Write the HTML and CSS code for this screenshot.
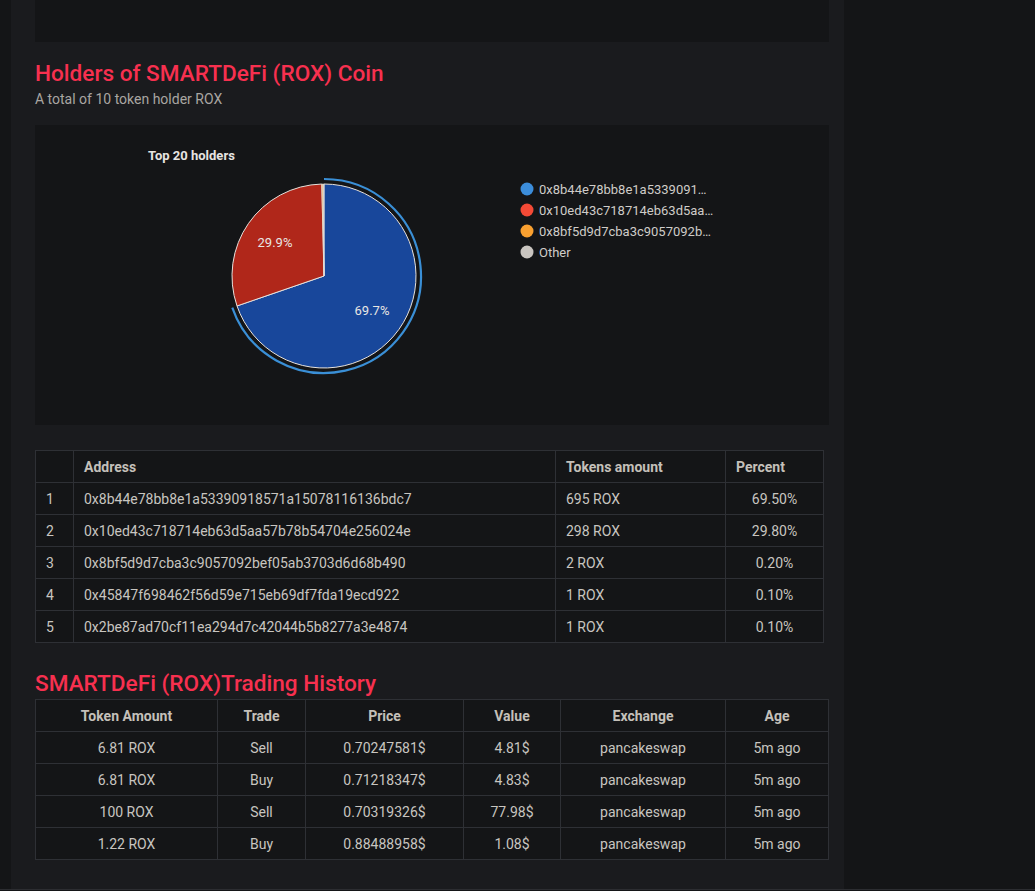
FILE: index.html
```html
<!DOCTYPE html>
<html lang="en">
<head>
<meta charset="utf-8">
<title>SMARTDeFi (ROX) Holders</title>
<link rel="stylesheet" href="styles.css">
</head>
<body>
<div class="layout">
  <main class="panel">
    <div class="top-card"></div>

    <section class="holders">
      <h2 class="section-title">Holders of SMARTDeFi (ROX) Coin</h2>
      <p class="section-sub">A total of 10 token holder ROX</p>

      <div class="chart-card">
        <svg class="chart" width="794" height="300" viewBox="0 0 794 300">
          <text class="chart-title" x="113" y="35">Top 20 holders</text>
          <g class="pie">
            <path d="M289 59 A92 92 0 1 1 202.01 180.95 L289 151 Z" fill="#18479b" stroke="#e6e2dd" stroke-width="1"/>
            <path d="M202.01 180.95 A92 92 0 0 1 286.75 59.03 L289 151 Z" fill="#b0271a" stroke="#e6e2dd" stroke-width="1"/>
            <path d="M286.75 59.03 A92 92 0 0 1 287.9 59.01 L289 151 Z" fill="#f9a030" stroke="#e6e2dd" stroke-width="0.6"/>
            <path d="M287.9 59.01 A92 92 0 0 1 289 59 L289 151 Z" fill="#c9c5c0" stroke="#e6e2dd" stroke-width="0.6"/>
            <path d="M289 54 A97 97 0 1 1 197.28 182.58" fill="none" stroke="#3a8fd6" stroke-width="2.2"/>
            <text class="pie-label" x="337" y="190" text-anchor="middle">69.7%</text>
            <text class="pie-label" x="240" y="122" text-anchor="middle">29.9%</text>
          </g>
          <g class="legend">
            <circle cx="492" cy="64" r="6.5" fill="#3c8ddb"/>
            <text x="504" y="68.5">0x8b44e78bb8e1a5339091…</text>
            <circle cx="492" cy="85" r="6.5" fill="#f44a36"/>
            <text x="504" y="89.5">0x10ed43c718714eb63d5aa…</text>
            <circle cx="492" cy="106" r="6.5" fill="#f9a030"/>
            <text x="504" y="110.5">0x8bf5d9d7cba3c9057092b…</text>
            <circle cx="492" cy="127" r="6.5" fill="#c9c5c0"/>
            <text x="504" y="131.5">Other</text>
          </g>
        </svg>
      </div>

      <table class="grid holders-table">
        <colgroup>
          <col class="c-idx"><col class="c-addr"><col class="c-tok"><col class="c-pct">
        </colgroup>
        <thead>
          <tr><th></th><th>Address</th><th>Tokens amount</th><th>Percent</th></tr>
        </thead>
        <tbody>
          <tr><td>1</td><td>0x8b44e78bb8e1a53390918571a15078116136bdc7</td><td>695 ROX</td><td class="pct">69.50%</td></tr>
          <tr><td>2</td><td>0x10ed43c718714eb63d5aa57b78b54704e256024e</td><td>298 ROX</td><td class="pct">29.80%</td></tr>
          <tr><td>3</td><td>0x8bf5d9d7cba3c9057092bef05ab3703d6d68b490</td><td>2 ROX</td><td class="pct">0.20%</td></tr>
          <tr><td>4</td><td>0x45847f698462f56d59e715eb69df7fda19ecd922</td><td>1 ROX</td><td class="pct">0.10%</td></tr>
          <tr><td>5</td><td>0x2be87ad70cf11ea294d7c42044b5b8277a3e4874</td><td>1 ROX</td><td class="pct">0.10%</td></tr>
        </tbody>
      </table>
    </section>

    <section class="history">
      <h2 class="section-title">SMARTDeFi (ROX)Trading History</h2>
      <table class="grid trade-table">
        <colgroup>
          <col class="t1"><col class="t2"><col class="t3"><col class="t4"><col class="t5"><col class="t6">
        </colgroup>
        <thead>
          <tr><th>Token Amount</th><th>Trade</th><th>Price</th><th>Value</th><th>Exchange</th><th>Age</th></tr>
        </thead>
        <tbody>
          <tr><td>6.81 ROX</td><td>Sell</td><td>0.70247581$</td><td>4.81$</td><td>pancakeswap</td><td>5m ago</td></tr>
          <tr><td>6.81 ROX</td><td>Buy</td><td>0.71218347$</td><td>4.83$</td><td>pancakeswap</td><td>5m ago</td></tr>
          <tr><td>100 ROX</td><td>Sell</td><td>0.70319326$</td><td>77.98$</td><td>pancakeswap</td><td>5m ago</td></tr>
          <tr><td>1.22 ROX</td><td>Buy</td><td>0.88488958$</td><td>1.08$</td><td>pancakeswap</td><td>5m ago</td></tr>
        </tbody>
      </table>
    </section>
  </main>
</div>
<footer class="footer"></footer>
</body>
</html>
```

FILE: styles.css
```css
* { box-sizing: border-box; }

html, body {
  margin: 0;
  padding: 0;
  background: #141517;
  font-family: Roboto, "Liberation Sans", Arial, sans-serif;
  color: #c8c5c0;
}

.layout {
  display: flex;
  padding-left: 11px;
}

.panel {
  width: 833px;
  background: #1a1b1e;
  padding: 0 15px 29px 24px;
}

.top-card {
  height: 42px;
  background: #141517;
}

.section-title {
  margin: 0;
  font-size: 22.6px;
  line-height: 26px;
  font-weight: 500;
  color: #f7304f;
}

.holders .section-title {
  margin-top: 19px;
}

.section-sub {
  margin: 4px 0 0;
  font-size: 14px;
  line-height: 16px;
  color: #a9a6a2;
}

.chart-card {
  margin-top: 18px;
  height: 300px;
  background: #141517;
}

.chart {
  display: block;
}

.chart-title {
  font-family: Roboto, "Liberation Sans", sans-serif;
  font-size: 13px;
  font-weight: 700;
  fill: #e6e4e1;
}

.pie-label {
  font-family: Roboto, "Liberation Sans", sans-serif;
  font-size: 13px;
  fill: #e8e6e3;
}

.legend text {
  font-family: Roboto, "Liberation Sans", sans-serif;
  font-size: 13px;
  fill: #cfccc8;
}

.grid {
  border-collapse: collapse;
  table-layout: fixed;
  background: #141517;
  font-size: 14px;
}

.grid th,
.grid td {
  border: 1px solid #2e3035;
  height: 32px;
  padding: 0 10px;
  line-height: 16px;
  white-space: nowrap;
  overflow: hidden;
}

.grid th {
  font-weight: 700;
  color: #c4c0ba;
  text-align: left;
}

.grid td {
  color: #c8c5c0;
}

.holders-table {
  width: 788px;
  margin-top: 25px;
}

.c-idx { width: 38px; }
.c-addr { width: 482px; }
.c-tok { width: 170px; }
.c-pct { width: 98px; }

.holders-table td.pct {
  text-align: center;
}

.history .section-title {
  margin-top: 28px;
}

.trade-table {
  width: 793px;
  margin-top: 2px;
}

.trade-table th,
.trade-table td {
  text-align: center;
}

.t1 { width: 182px; }
.t2 { width: 88px; }
.t3 { width: 158px; }
.t4 { width: 97px; }
.t5 { width: 165px; }
.t6 { width: 103px; }

.footer {
  border-top: 1px solid #2c2d31;
  height: 20px;
}
```
